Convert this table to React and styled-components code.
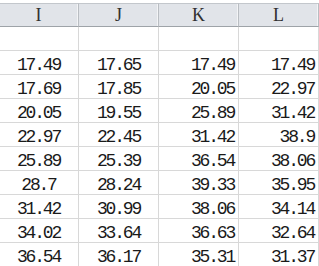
import React from "react";
import styled, { createGlobalStyle } from "styled-components";

const Global = createGlobalStyle`
  html, body { margin: 0; padding: 0; background: #ffffff; overflow: hidden; }
  body { width: 319px; height: 266px; }
`;

const Sheet = styled.div`
  padding-top: 3px;
  margin-left: -1px;
  width: 320px;
`;

const Grid = styled.div`
  display: grid;
  grid-template-columns: repeat(4, 80px);
`;

const HeadCell = styled.div`
  height: 24px;
  box-sizing: border-box;
  background: #e1e4e9;
  border-top: 1px solid #c3c7cc;
  border-bottom: 1px solid #9ea3a8;
  border-right: 1px solid #b9bdc2;
  box-shadow: inset -3px 0 0 -2px #f3f4f6;
  display: flex;
  align-items: center;
  justify-content: center;
  font-family: "Liberation Serif", serif;
  font-size: 18px;
  color: #303030;
`;

const Cell = styled.div`
  height: 24px;
  box-sizing: border-box;
  border-bottom: 1px solid #d8d8d8;
  border-right: 1px solid #d8d8d8;
  display: flex;
  align-items: flex-end;
  justify-content: ${(p) => (p.$align === "right" ? "flex-end" : "center")};
  padding: 0 ${(p) => (p.$align === "right" ? "4px" : "0")} 0 0;
  font-family: "Liberation Mono", monospace;
  font-size: 18px;
  letter-spacing: -2.2px;
  line-height: 18px;
  color: #1a1a1a;
  white-space: pre;
`;

const cols = ["I", "J", "K", "L"];
const align = ["center", "center", "right", "right"];
const data = [
  ["", "", "", ""],
  ["17.49", "17.65", "17.49", "17.49"],
  ["17.69", "17.85", "20.05", "22.97"],
  ["20.05", "19.55", "25.89", "31.42"],
  ["22.97", "22.45", "31.42", "38.9"],
  ["25.89", "25.39", "36.54", "38.06"],
  ["28.7", "28.24", "39.33", "35.95"],
  ["31.42", "30.99", "38.06", "34.14"],
  ["34.02", "33.64", "36.63", "32.64"],
  ["36.54", "36.17", "35.31", "31.37"],
];

export default function App() {
  return (
    <>
      <Global />
      <Sheet>
        <Grid>
          {cols.map((c) => (
            <HeadCell key={c}>{c}</HeadCell>
          ))}
          {data.map((row, r) =>
            row.map((v, i) => (
              <Cell key={r + "-" + i} $align={align[i]}>
                {v}
              </Cell>
            ))
          )}
        </Grid>
      </Sheet>
    </>
  );
}
